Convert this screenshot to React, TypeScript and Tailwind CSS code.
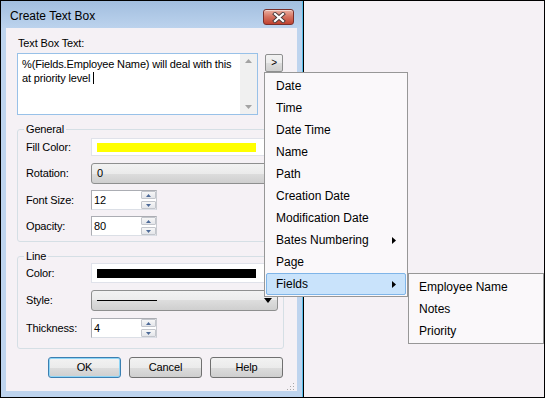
import React from "react";

const F = { fontFamily: '"Liberation Sans", Arial, sans-serif' };

function CloseBtn() {
  return (
    <div className="w-[31px] h-[16px] rounded-[3px] border border-[#7a2f2a] bg-gradient-to-b from-[#eab0a2] via-[#d4705e] to-[#c0412f] flex items-center justify-center shadow-[inset_0_1px_0_rgba(255,255,255,0.5)]">
      <svg width="14" height="11" viewBox="0 0 14 11">
        <path d="M3 2 L11 9 M11 2 L3 9" stroke="#4a3a3a" strokeWidth="4" strokeLinecap="square" />
        <path d="M3 2 L11 9 M11 2 L3 9" stroke="#ffffff" strokeWidth="2.2" strokeLinecap="square" />
      </svg>
    </div>
  );
}

function SpinBtn({ up }: { up?: boolean }) {
  return (
    <div className="h-[8px] w-[15px] border border-[#c3c6cc] rounded-[1px] bg-gradient-to-b from-[#f7f7f7] to-[#e4e6ea] flex items-center justify-center">
      <svg width="5" height="3" viewBox="0 0 5 3">
        {up ? <path d="M0 3 L2.5 0 L5 3 Z" fill="#4d6a98" /> : <path d="M0 0 L2.5 3 L5 0 Z" fill="#4d6a98" />}
      </svg>
    </div>
  );
}

function Spin({ value }: { value: string }) {
  return (
    <div className="flex w-[66px] h-[20px] border border-[#abadb3] border-r-[#c8cbd0] border-b-[#dbdfe6] bg-white">
      <div className="flex-1 pl-[2px] leading-[18px]">{value}</div>
      <div className="flex flex-col justify-between py-0 pr-0 w-[15px]">
        <SpinBtn up />
        <SpinBtn />
      </div>
    </div>
  );
}

function Combo({ children, arrow, h = 21 }: { children?: React.ReactNode; arrow?: boolean; h?: number }) {
  return (
    <div
      className="flex items-center w-[187px] rounded-[3px] border border-[#8e8f8f] bg-[linear-gradient(to_bottom,#f2f2f2_0%,#ebebeb_50%,#dddddd_50%,#cfcfcf_100%)] pl-[5px] pr-[5px]"
      style={{ height: h }}
    >
      <div className="flex-1 flex items-center">{children}</div>
      {arrow && (
        <svg width="8" height="5" viewBox="0 0 8 5">
          <path d="M0 0 L8 0 L4 5 Z" fill="#000" />
        </svg>
      )}
    </div>
  );
}

function Swatch({ color, h }: { color: string; h: number }) {
  return (
    <div className="w-[187px] bg-white border border-[#e0e2ea] flex items-center pl-[5px]" style={{ height: h }}>
      <div className="w-[159px] h-[9px]" style={{ background: color }} />
    </div>
  );
}

function Row({ label, children, mt }: { label: string; children: React.ReactNode; mt: string }) {
  return (
    <div className={`flex items-center ${mt}`}>
      <div className="w-[65px] pl-[8px] box-content shrink-0">{label}</div>
      {children}
    </div>
  );
}

function Btn({ label, def }: { label: string; def?: boolean }) {
  return (
    <div
      className={`w-[73px] h-[21px] rounded-[3px] border flex items-center justify-center bg-[linear-gradient(to_bottom,#f2f2f2_0%,#ebebeb_50%,#dddddd_50%,#cfcfcf_100%)] ${
        def ? "border-[#3c7fb1] shadow-[inset_0_0_0_1px_#8fd6f7]" : "border-[#707070]"
      }`}
    >
      {label}
    </div>
  );
}

function Dialog() {
  return (
    <div className="w-[302px] h-[396px] flex flex-col bg-[#bed4ee] border-r border-[#56bde9] text-[11px] tracking-[-0.15px] text-black" style={F}>
      <div className="h-[27px] shrink-0 flex items-start justify-between pl-[9px] pr-[8px] pt-[8px] bg-gradient-to-b from-[#a2bedf] to-[#bcd3ed]">
        <div className="text-[12px] tracking-normal leading-[15px] mt-[0px]">Create Text Box</div>
        <CloseBtn />
      </div>
      <div className="flex-1 flex px-[5px]">
        <div className="flex-1 bg-[#f5f1f5] flex flex-col relative">
          <div className="pl-[12px] mt-[9px] leading-[13px]">Text Box Text:</div>
          <div className="flex items-start mt-[3px] ml-[11px]">
            <div className="w-[241px] h-[62px] border border-[#98c1e8] bg-white flex">
              <div className="flex-1 pl-[4px] pt-[3px] leading-[14px]">
                <div>%(Fields.Employee Name) will deal with this</div>
                <div className="flex items-center">
                  at priority level&nbsp;<span className="inline-block w-[1px] h-[12px] bg-black" />
                </div>
              </div>
              <div className="w-[17px] bg-[#f0f0f0] flex flex-col items-center justify-between py-[5px]">
                <svg width="7" height="4" viewBox="0 0 7 4"><path d="M0 4 L3.5 0 L7 4 Z" fill="#a3a3a3" /></svg>
                <svg width="7" height="4" viewBox="0 0 7 4"><path d="M0 0 L3.5 4 L7 0 Z" fill="#a3a3a3" /></svg>
              </div>
            </div>
            <div className="ml-[7px] mt-[1px] w-[18px] h-[18px] rounded-[2px] border border-[#8e8f8f] bg-[linear-gradient(to_bottom,#f2f2f2_0%,#ebebeb_50%,#dddddd_50%,#cfcfcf_100%)] flex items-center justify-center text-[10px] leading-none">
              &gt;
            </div>
          </div>

          <fieldset className="ml-[11px] mt-[8px] w-[267px] h-[119px] border border-[#d5dfe5] rounded-[3px]">
            <legend className="ml-[6px] px-[2px] leading-[13px]">General</legend>
            <Row label="Fill Color:" mt="mt-[2px]">
              <Swatch color="#ffff00" h={18} />
            </Row>
            <Row label="Rotation:" mt="mt-[7px]">
              <Combo>0</Combo>
            </Row>
            <Row label="Font Size:" mt="mt-[6px]">
              <Spin value="12" />
            </Row>
            <Row label="Opacity:" mt="mt-[6px]">
              <Spin value="80" />
            </Row>
          </fieldset>

          <fieldset className="ml-[11px] mt-[8px] w-[267px] h-[99px] border border-[#d5dfe5] rounded-[3px]">
            <legend className="ml-[6px] px-[2px] leading-[13px]">Line</legend>
            <Row label="Color:" mt="mt-[0px]">
              <Swatch color="#000000" h={20} />
            </Row>
            <Row label="Style:" mt="mt-[7px]">
              <Combo arrow>
                <div className="w-[60px] h-[1px] bg-black" />
              </Combo>
            </Row>
            <Row label="Thickness:" mt="mt-[7px]">
              <Spin value="4" />
            </Row>
          </fieldset>

          <div className="flex justify-end gap-[8px] pr-[14px] mt-[8px]">
            <Btn label="OK" def />
            <Btn label="Cancel" />
            <Btn label="Help" />
          </div>

          <svg className="absolute right-[3px] bottom-[1px]" width="7" height="7" viewBox="0 0 7 7">
            {[
              [5, 0], [5, 3], [2, 3], [5, 6], [2, 6], [-1, 6],
            ].map(([x, y], i) => (
              <rect key={i} x={x + 1} y={y} width="1" height="1" fill="#a8a8a8" />
            ))}
          </svg>
        </div>
      </div>
      <div className="h-[6px] shrink-0" />
    </div>
  );
}

function Arrow() {
  return (
    <svg width="4" height="7" viewBox="0 0 4 7">
      <path d="M0 0 L4 3.5 L0 7 Z" fill="#000" />
    </svg>
  );
}

function MenuItem({ label, sub, active, pl = "pl-[9px]" }: { label: string; sub?: boolean; active?: boolean; pl?: string }) {
  return (
    <div
      className={`h-[22px] mx-[1px] flex items-center justify-between ${pl} pr-[9px] border rounded-[2px] ${
        active ? "bg-[#c9e3fb] border-[#7fb5e8]" : "border-transparent"
      }`}
    >
      <span>{label}</span>
      {sub && <Arrow />}
    </div>
  );
}

export default function App() {
  const items = ["Date", "Time", "Date Time", "Name", "Path", "Creation Date", "Modification Date"];
  return (
    <div className="relative w-[545px] h-[398px] border border-black bg-[#f5f1f5] flex overflow-hidden" style={F}>
      <Dialog />
      <div className="flex-1 border-l border-black bg-[#f5f1f5]" />

      <div className="absolute left-[263px] top-[71px] w-[144px] border border-[#979797] bg-[#faf8fa] pt-[2px] pb-[1px] text-[12px] text-black">
        {items.map((t) => (
          <MenuItem key={t} label={t} />
        ))}
        <MenuItem label="Bates Numbering" sub />
        <MenuItem label="Page" />
        <MenuItem label="Fields" sub active />
      </div>

      <div className="absolute left-[407px] top-[272px] w-[136px] border border-[#979797] bg-[#faf8fa] pt-[2px] pb-[1px] text-[12px] text-black">
        <MenuItem label="Employee Name" pl="pl-[8px]" />
        <MenuItem label="Notes" pl="pl-[8px]" />
        <MenuItem label="Priority" pl="pl-[8px]" />
      </div>
    </div>
  );
}
